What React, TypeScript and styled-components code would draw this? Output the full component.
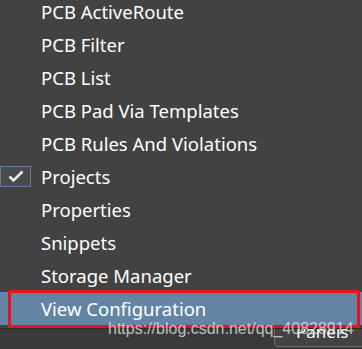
import React from "react";
import styled, { createGlobalStyle } from "styled-components";

const Global = createGlobalStyle`
  html, body { margin: 0; padding: 0; background: #3a3a3a; }
  #root { width: 362px; height: 349px; overflow: hidden; }
`;

const Page = styled.div`
  position: relative;
  width: 362px;
  height: 349px;
  overflow: hidden;
  background: #3a3a3a;
  display: flex;
  flex-direction: column;
  justify-content: flex-end;
`;

const StatusBar = styled.div`
  height: 40px;
  display: flex;
  justify-content: flex-end;
  align-items: flex-end;
  padding-bottom: 2px;
  box-sizing: border-box;
`;

const PanelsButton = styled.div`
  width: 100px;
  height: 36px;
  margin-right: -12px;
  box-sizing: border-box;
  border: 1px solid #6a6a6a;
  border-radius: 4px;
  background: #434343;
  color: #ffffff;
  font-family: "Noto Sans", sans-serif;
  font-size: 17px;
  display: flex;
  align-items: flex-end;
  padding: 0 0 3px 21px;
`;

const Menu = styled.ul`
  position: absolute;
  top: -5px;
  left: 0;
  right: 0;
  margin: 0;
  padding: 0 0 3px 0;
  list-style: none;
  background: #424242;
  border-bottom: 1px solid #2a2a2a;
  z-index: 1;
`;

const Item = styled.li<{ $active?: boolean }>`
  position: relative;
  height: 33px;
  display: flex;
  align-items: center;
  padding-left: 41px;
  font-family: "Noto Sans", sans-serif;
  font-size: 18.5px;
  color: #ffffff;
  background: ${(p) => (p.$active ? "#6484a4" : "transparent")};
  white-space: nowrap;
`;

const CheckBox = styled.span`
  position: absolute;
  left: 0;
  top: 6px;
  width: 31px;
  height: 21px;
  box-sizing: border-box;
  border: 1px solid #5f7fa0;
  background: #4a4a4a;
  display: flex;
  align-items: center;
  justify-content: center;
`;

const Highlight = styled.span`
  position: absolute;
  left: 8px;
  right: 2px;
  top: -2px;
  bottom: -3px;
  border: 3.5px solid #e8141c;
  pointer-events: none;
`;

const Watermark = styled.div`
  position: absolute;
  left: 108px;
  top: 320px;
  font-family: "Liberation Sans", Arial, sans-serif;
  font-size: 16px;
  color: rgba(225, 225, 225, 0.8);
  z-index: 2;
  white-space: nowrap;
`;

const items = [
  "PCB ActiveRoute",
  "PCB Filter",
  "PCB List",
  "PCB Pad Via Templates",
  "PCB Rules And Violations",
  "Projects",
  "Properties",
  "Snippets",
  "Storage Manager",
  "View Configuration",
];

export default function App() {
  return (
    <>
      <Global />
      <Page>
        <Menu>
          {items.map((label) => (
            <Item key={label} $active={label === "View Configuration"}>
              {label === "Projects" && (
                <CheckBox>
                  <svg width="16" height="13" viewBox="0 0 16 13">
                    <path d="M1.5 6.5 L5.5 10.5 L14.5 1.5" fill="none" stroke="#e8e8e8" strokeWidth="2.6" />
                  </svg>
                </CheckBox>
              )}
              {label}
              {label === "View Configuration" && <Highlight />}
            </Item>
          ))}
        </Menu>
        <StatusBar>
          <PanelsButton>Panels</PanelsButton>
        </StatusBar>
        <Watermark>https://blog.csdn.net/qq_40828914</Watermark>
      </Page>
    </>
  );
}
